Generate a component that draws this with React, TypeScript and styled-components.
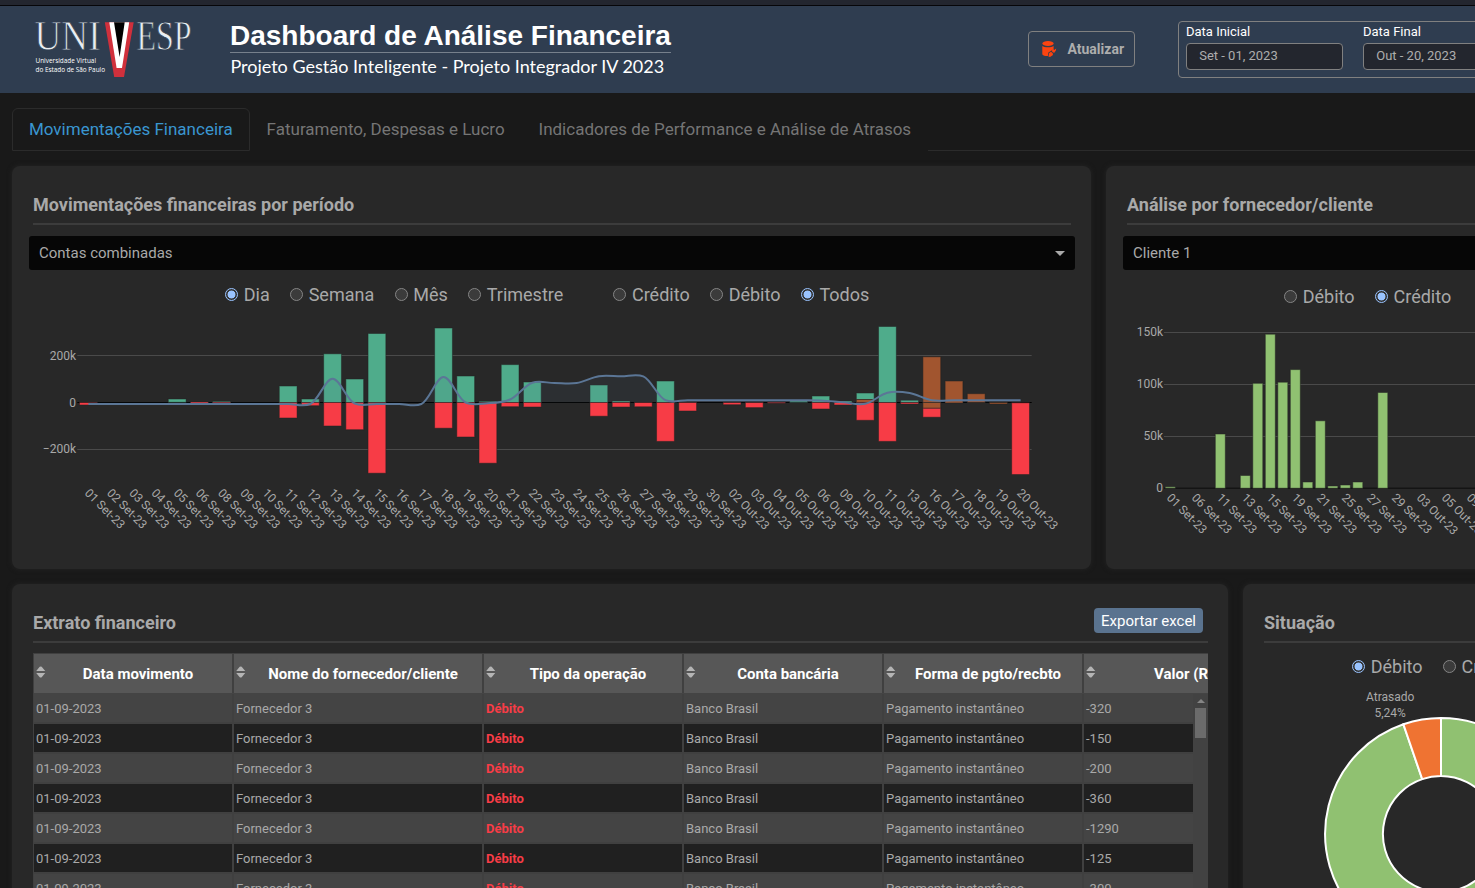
import React from "react";
import styled, { createGlobalStyle, css } from "styled-components";

const Global = createGlobalStyle`
  * { box-sizing: border-box; }
  html, body { margin: 0; padding: 0; height: 100%; overflow: hidden; background: #191919; }
  body { font-family: Roboto, "Liberation Sans", sans-serif; color: #a9a9a9; }
`;

const Page = styled.div`
  height: 888px;
  overflow: hidden;
  background: #191919;
`;

const TopStrip = styled.div`
  height: 6px;
  background: #23262f;
  border-bottom: 1px solid #060609;
`;

const Header = styled.header`
  display: flex;
  align-items: flex-start;
  width: 1900px;
  height: 87px;
  background: #2f3d50;
`;

const LogoBox = styled.div`
  width: 230px;
  flex: none;
  padding: 12px 0 0 30px;
  svg { display: block; }
`;

const Titles = styled.div`
  width: 798px;
  flex: none;
  padding-top: 14px;
  color: #fff;
`;

const Title = styled.h1`
  display: inline-block;
  margin: 0;
  height: 33px;
  font: bold 28px/32px "Liberation Sans", Arial, sans-serif;
  border-bottom: 1px solid #76808c;
  white-space: nowrap;
`;

const Subtitle = styled.div`
  padding-left: 0.4px;
  font: 18px/26px Lato, sans-serif;
  white-space: nowrap;
`;

const RefreshButton = styled.button`
  display: flex;
  align-items: center;
  gap: 10.5px;
  width: 107px;
  height: 36px;
  margin: 25px 43px 0 0;
  padding: 0 0 0 12px;
  flex: none;
  background: transparent;
  border: 1px solid #808080;
  border-radius: 4px;
  color: #adadad;
  font: bold 14px Roboto, sans-serif;
`;

const DateBox = styled.div`
  display: flex;
  gap: 20px;
  width: 345px;
  height: 57px;
  margin-top: 15px;
  padding: 2px 7px;
  border: 1px solid #808080;
  border-radius: 4px;
`;

const DateField = styled.label`
  display: block;
  width: 157px;
  flex: none;
  color: #fff;
  font-size: 13px;
  line-height: 16px;
`;

const DateInput = styled.div`
  height: 27px;
  margin-top: 3px;
  padding-left: 12.2px;
  border: 1px solid #808080;
  border-radius: 4px;
  background: #23262e;
  color: #adadad;
  line-height: 23px;
`;

const Tabs = styled.nav`
  display: flex;
  width: 1900px;
  height: 43px;
  margin: 15px 0 15px 12px;
`;

const Tab = styled.div<{ $active?: boolean }>`
  flex: none;
  height: 43px;
  padding: 0 15.95px;
  border: 1px solid transparent;
  border-radius: 6px 6px 0 0;
  font-size: 17px;
  line-height: 41px;
  white-space: nowrap;
  color: #757575;
  ${(p) => p.$active && css`
    color: #3a96d0;
    border-color: #2b2b2b;
  `}
`;

const TabFiller = styled.div`
  flex: 1;
  border-bottom: 1px solid #2b2b2b;
`;

const CardRow = styled.div<{ $height: number }>`
  display: flex;
  gap: 15px;
  width: 1900px;
  height: ${(p) => p.$height}px;
  margin: 0 0 15px 12px;
`;

const Card = styled.section<{ $width: number }>`
  width: ${(p) => p.$width}px;
  flex: none;
  padding: 25px 16px 0 17px;
  border-radius: 8px;
  background: #282828;
  box-shadow: 0 0 4px 1px #212121;
`;

const CardHead = styled.div`
  display: flex;
  justify-content: space-between;
  height: 34px;
  margin: 0 4px 11px;
  border-bottom: 2px solid #3c3c3c;
`;

const CardTitle = styled.h2`
  margin: 0;
  font-size: 18px;
  font-weight: bold;
  line-height: 28px;
  color: #a9a9a9;
  white-space: nowrap;
`;

const ExportButton = styled.button`
  width: 109px;
  height: 25px;
  margin: -1px 5px 0 0;
  padding: 0;
  border: 0;
  border-radius: 4px;
  background: #5a738f;
  color: #fff;
  font: 15px Roboto, sans-serif;
`;

const Select = styled.div`
  display: flex;
  align-items: center;
  justify-content: space-between;
  height: 34px;
  padding: 0 10px;
  border-radius: 3px;
  background: #060606;
  color: #a9a9a9;
  font-size: 15px;
`;

const Caret = styled.span`
  border: 5px solid transparent;
  border-top-color: #a9a9a9;
  border-bottom: 0;
`;

const Radios = styled.div<{ $left: number; $top: number; $raise?: number }>`
  display: flex;
  height: 24px;
  margin: ${(p) => p.$top}px 0 0 ${(p) => p.$left}px;
  i { margin-bottom: ${(p) => p.$raise ?? 0}px; }
`;

const RadioLabel = styled.span<{ $last?: boolean }>`
  display: flex;
  flex: none;
  align-items: center;
  gap: 5.7px;
  margin-right: ${(p) => (p.$last ? 50 : 20.3)}px;
  font-size: 18px;
  line-height: 24px;
  color: #a9a9a9;
`;

const Dot = styled.i<{ $on?: boolean }>`
  width: 13px;
  height: 13px;
  flex: none;
  border-radius: 50%;
  border: 1px solid ${(p) => (p.$on ? "#99c3ff" : "#858585")};
  background: ${(p) => (p.$on ? "radial-gradient(circle, #99c3ff 3.6px, #333 4.3px)" : "#3b3b3b")};
`;

const Plot = styled.svg<{ $pull: number }>`
  display: block;
  margin-top: ${(p) => p.$pull}px;
  overflow: visible;
  font: 12px Roboto, sans-serif;
  text { fill: #a9a9a9; }
`;

const Table = styled.div`
  width: 1175px;
  height: 260px;
  margin: -1px 4px 0;
  overflow: hidden;
  border-left: 1px solid #404040;
  border-top: 1px solid #404040;
`;

const HeadRow = styled.div`
  display: flex;
  width: 1400px;
  height: 40px;
  border-bottom: 1px solid #444;
`;

const HeadCell = styled.div<{ $width: number }>`
  display: flex;
  align-items: center;
  width: ${(p) => p.$width}px;
  flex: none;
  padding: 0 2px;
  border-right: 2px solid #404040;
  background: #575757;
  color: #fff;
  font-size: 15px;
  font-weight: bold;
  svg { flex: none; margin-bottom: 3px; }
  span { flex: 1; text-align: center; white-space: nowrap; }
`;

const BodyArea = styled.div`
  display: flex;
  width: 1174px;
`;

const Rows = styled.div`
  width: 1159px;
  overflow: hidden;
`;

const Row = styled.div<{ $dark: boolean }>`
  display: flex;
  width: 1400px;
  height: 30px;
  background: ${(p) => (p.$dark ? "#202020" : "#444")};
`;

const Cell = styled.div<{ $width: number; $debit?: boolean }>`
  width: ${(p) => p.$width}px;
  flex: none;
  padding-left: 2px;
  border-right: 2px solid #404040;
  border-bottom: 2px solid #404040;
  font-size: 13px;
  line-height: 29px;
  color: ${(p) => (p.$debit ? "#f73c46" : "#a9a9a9")};
  font-weight: ${(p) => (p.$debit ? "bold" : "normal")};
`;

const Scroll = styled.div`
  display: flex;
  flex-direction: column;
  align-items: center;
  width: 15px;
  height: 240px;
  background: #424242;
`;

const ScrollArrow = styled.i`
  margin-top: 5px;
  border: 4px solid transparent;
  border-top: 0;
  border-bottom-color: #858585;
`;

const Thumb = styled.i`
  width: 11px;
  height: 30px;
  margin-top: 5px;
  background: #6b6b6b;
`;

function Logo() {
  return (
    <svg width="170" height="70" viewBox="30 18 170 70">
      <g fontFamily="Liberation Serif, serif" fontSize="42" fill="#e9edf1" stroke="#2f3d50" strokeWidth="0.8">
        <text x="34.5" y="50.3" textLength="66" lengthAdjust="spacingAndGlyphs">UNI</text>
        <text x="136.5" y="50.3" textLength="55" lengthAdjust="spacingAndGlyphs">ESP</text>
      </g>
      <polygon points="104.8,22.3 133.7,22.3 124,77 114.2,77" fill="#d0303c" />
      <polygon points="109.3,22.3 129.2,22.3 122,68 116.6,68" fill="#fff" />
      <polygon points="114,22.3 124.7,22.3 119.6,57" fill="#000" />
      <g fontFamily="Open Sans, sans-serif" fontSize="6.4" fontWeight="500" fill="#fff">
        <text x="35.5" y="63" textLength="60.5">Universidade Virtual</text>
        <text x="35.5" y="71.8" textLength="69.5">do Estado de São Paulo</text>
      </g>
    </svg>
  );
}

function DatabaseIcon() {
  return (
    <svg width="16" height="18" viewBox="0 0 16 18" fill="#fb4410">
      <ellipse cx="7" cy="3.4" rx="5.6" ry="2.5" />
      <path d="M1.3 5.9C3 7.5 10.6 7.6 12.6 5.9V9.2L7.4 12.6L6.9 16H4.6C2.8 15.7 1.3 15 1.3 14Z" />
      <path d="M8.2 12.9L10 11.7L11.6 13L12 15L9 17L7.4 16.4Z" />
      <path d="M11.2 9.8L12.8 9.2L13.2 10L15.2 8.4L14.9 10.5L13.1 13L11 11.6Z" />
    </svg>
  );
}

function SortIcon() {
  return (
    <svg width="10" height="12" viewBox="0.3 0 10 12">
      <path d="M0.5 5L4 0.8Q5 0 6 0.8L9.5 5Z M0.5 7H9.5L6 11.2Q5 12 4 11.2Z" fill="#b4b4b4" />
    </svg>
  );
}

type Pt = [number, number];

/** Centripetal Catmull-Rom curve through the points, ends drawn as quadratics. */
function spline(pts: Pt[]) {
  const tangent = (a: Pt, b: Pt, c: Pt): [Pt, Pt] => {
    const d1 = [a[0] - b[0], a[1] - b[1]];
    const d2 = [c[0] - b[0], c[1] - b[1]];
    const l1 = Math.pow(d1[0] ** 2 + d1[1] ** 2, 0.25);
    const l2 = Math.pow(d2[0] ** 2 + d2[1] ** 2, 0.25);
    const nx = l2 * l2 * d1[0] - l1 * l1 * d2[0];
    const ny = l2 * l2 * d1[1] - l1 * l1 * d2[1];
    const k1 = 3 * l2 * (l1 + l2);
    const k2 = 3 * l1 * (l1 + l2);
    return [
      [b[0] + nx / k1, b[1] + ny / k1],
      [b[0] - nx / k2, b[1] - ny / k2],
    ];
  };
  const t = pts.slice(1, -1).map((p, i) => tangent(pts[i], p, pts[i + 2]));
  let d = `M${pts[0]}Q${t[0][0]} ${pts[1]}`;
  for (let i = 2; i < pts.length - 1; i++) d += `C${t[i - 2][1]} ${t[i - 1][0]} ${pts[i]}`;
  return d + `Q${t[t.length - 1][1]} ${pts[pts.length - 1]}`;
}

const SET = "01 02 03 04 05 06 08 09 10 11 12 13 14 15 16 17 18 19 20 21 22 23 24 25 26 27 28 29 30".split(" ").map((d) => d + " Set-23");
const OUT = "02 03 04 05 06 09 10 11 13 16 17 18 19 20".split(" ").map((d) => d + " Out-23");
const DAYS = [...SET, ...OUT];

const GREEN = "#4fac8b";
const RED = "#f73c46";
const BROWN = "#a1552f";

// [day index, top, bottom, colour]
const BARS: [number, number, number, string][] = [
  [0, 402.5, 405, RED], [4, 399, 402.3, GREEN], [5, 402, 404, RED], [6, 401.2, 402.5, GREEN], [6, 402, 403, RED],
  [9, 386, 402.5, GREEN], [9, 402.5, 418, RED], [10, 399, 402.5, GREEN], [10, 402.5, 405.7, RED],
  [11, 353.8, 402.5, GREEN], [11, 402.5, 426, RED], [12, 379, 402.5, GREEN], [12, 402.5, 429.7, RED],
  [13, 333.5, 402.5, GREEN], [13, 402.5, 473.2, RED], [16, 328, 402.5, GREEN], [16, 402.5, 428.2, RED],
  [17, 376, 402.5, GREEN], [17, 402.5, 437, RED], [18, 401.3, 402.5, GREEN], [18, 402.5, 463.2, RED],
  [19, 364.6, 402.5, GREEN], [19, 402.5, 406.7, RED], [20, 382, 402.5, GREEN], [20, 402.5, 407, RED],
  [23, 385, 402.5, GREEN], [23, 402.5, 416.2, RED], [24, 401, 402.5, GREEN], [24, 402.5, 407, RED],
  [25, 402.5, 406.8, RED], [26, 381, 402.5, GREEN], [26, 402.5, 441.4, RED], [27, 402.5, 411, RED],
  [29, 402.5, 404.7, RED], [30, 402.5, 407.6, RED], [31, 402.2, 403.2, RED], [32, 401, 402.5, GREEN],
  [33, 396, 402.5, GREEN], [33, 402.5, 409, RED], [34, 401, 402.5, GREEN], [34, 402.5, 405, RED],
  [35, 393, 399.5, GREEN], [35, 399.5, 402.5, BROWN], [35, 402.5, 420.3, RED], [36, 326.5, 402.5, GREEN],
  [36, 402.5, 441.4, RED], [37, 400.2, 402.5, GREEN], [37, 402.5, 404, RED], [38, 356.8, 402.5, BROWN],
  [38, 402.5, 408.3, BROWN], [38, 408.3, 417.2, RED], [39, 381, 403, BROWN], [40, 393.7, 402.5, BROWN],
  [41, 402.5, 404, BROWN], [42, 402.8, 474.5, RED],
];

const BALANCE = [
  404, 404, 404, 404, 404, 404, 404, 404, 404, 404, 404, 378.8, 403.5, 404, 404, 404, 377, 402.5, 403.2, 399.5, 382.7,
  383, 383, 376.2, 376.3, 376.4, 400.2, 400.2, 400.2, 400.2, 400.2, 400.2, 400.2, 400.4, 402.3, 403.8, 392.7, 393, 400.2,
  400.2, 400.2, 400.2, 400.2,
];

const dayX = (i: number) => 88.4 + i * 22.195;

function MovementsChart() {
  const line = spline(BALANCE.map((y, i) => [dayX(i), y] as Pt));
  return (
    <Plot $pull={10} width="1046" height="230" viewBox="29 317 1046 230">
      {[355.5, 449.5].map((y) => <path key={y} d={`M77.3 ${y}H1031.7`} stroke="#4a4a4a" />)}
      <path d="M77.3 402.5H1031.7" stroke="#000" />
      {BARS.map(([i, top, bottom, fill], k) => (
        <rect key={k} x={dayX(i) - 8.9} y={top} width="17.8" height={bottom - top} fill={fill} stroke="#222" strokeWidth="1" strokeOpacity="0.5" />
      ))}
      <path d={`${line}V402.5H88.4Z`} fill="#5b7696" fillOpacity="0.1" />
      <path d={line} fill="none" stroke="#5b7696" strokeWidth="2" />
      <g textAnchor="end">
        <text x="76" y="360">200k</text>
        <text x="76" y="407">0</text>
        <text x="76" y="453.3">−200k</text>
      </g>
      {DAYS.map((d, i) => (
        <text key={d} transform={`translate(${dayX(i) - 4.3} 493.7) rotate(45)`}>{d}</text>
      ))}
    </Plot>
  );
}

const CLIENT_LABELS = ["01 Set-23", "06 Set-23", "11 Set-23", "13 Set-23", "15 Set-23", "19 Set-23", "21 Set-23", "25 Set-23", "27 Set-23", "29 Set-23", "03 Out-23", "05 Out-23", "09 Out-23"];
const CLIENT_BARS: Pt[] = [[0, 486.8], [4, 434], [6, 475.5], [7, 383.3], [8, 334.2], [9, 382.2], [10, 369.6], [11, 482], [12, 420.8], [13, 486], [14, 485], [15, 482], [17, 392.5]];

function ClientChart() {
  return (
    <Plot $pull={8} width="700" height="230" viewBox="1123 317 700 230">
      {[332.5, 384.5, 436.5].map((y) => <path key={y} d={`M1164 ${y}H1800`} stroke="#4a4a4a" />)}
      <path d="M1164 488.2H1800" stroke="#0c0c0c" />
      {CLIENT_BARS.map(([i, top]) => (
        <rect key={i} x={1165.3 + i * 12.5} y={top} width="10" height={488.2 - top} fill="#90c171" stroke="#222" strokeWidth="1" strokeOpacity="0.5" />
      ))}
      <g textAnchor="end">
        <text x="1163" y="336">150k</text>
        <text x="1163" y="388">100k</text>
        <text x="1163" y="440">50k</text>
        <text x="1163" y="492">0</text>
      </g>
      {CLIENT_LABELS.map((d, i) => (
        <text key={d} transform={`translate(${1166.1 + i * 25} 498.6) rotate(45)`}>{d}</text>
      ))}
    </Plot>
  );
}

function StatusChart() {
  return (
    <Plot $pull={8} width="400" height="290" viewBox="1260 687 400 290">
      <g stroke="#fff" strokeWidth="2">
        <path d="M1441 718A116 116 0 1 1 1403.4 724.3L1422.2 779.1A58 58 0 1 0 1441 776Z" fill="#90c171" />
        <path d="M1403.4 724.3A116 116 0 0 1 1441 718V776A58 58 0 0 0 1422.2 779.1Z" fill="#ef7332" />
      </g>
      <g textAnchor="middle">
        <text x="1390.2" y="701">Atrasado</text>
        <text x="1390.2" y="717">5,24%</text>
      </g>
    </Plot>
  );
}

function Radio({ label, on, last }: { label: string; on?: boolean; last?: boolean }) {
  return (
    <RadioLabel $last={last}>
      <Dot $on={on} />
      {label}
    </RadioLabel>
  );
}

const COLUMNS: [string, number][] = [
  ["Data movimento", 200],
  ["Nome do fornecedor/cliente", 250],
  ["Tipo da operação", 200],
  ["Conta bancária", 200],
  ["Forma de pgto/recbto", 200],
  ["Valor (R$)", 200],
];
const VALUES = ["-320", "-150", "-200", "-360", "-1290", "-125", "-300"];

export default function App() {
  return (
    <Page>
      <Global />
      <TopStrip />
      <Header>
        <LogoBox><Logo /></LogoBox>
        <Titles>
          <Title>Dashboard de Análise Financeira</Title>
          <Subtitle>Projeto Gestão Inteligente - Projeto Integrador IV 2023</Subtitle>
        </Titles>
        <RefreshButton><DatabaseIcon />Atualizar</RefreshButton>
        <DateBox>
          <DateField>Data Inicial<DateInput>Set - 01, 2023</DateInput></DateField>
          <DateField>Data Final<DateInput>Out - 20, 2023</DateInput></DateField>
        </DateBox>
      </Header>
      <Tabs>
        <Tab $active>Movimentações Financeira</Tab>
        <Tab>Faturamento, Despesas e Lucro</Tab>
        <Tab>Indicadores de Performance e Análise de Atrasos</Tab>
        <TabFiller />
      </Tabs>
      <CardRow $height={403}>
        <Card $width={1079}>
          <CardHead><CardTitle>Movimentações financeiras por período</CardTitle></CardHead>
          <Select>Contas combinadas<Caret /></Select>
          <Radios $left={196} $top={13} $raise={1}>
            <Radio label="Dia" on />
            <Radio label="Semana" />
            <Radio label="Mês" />
            <Radio label="Trimestre" last />
            <Radio label="Crédito" />
            <Radio label="Débito" />
            <Radio label="Todos" on />
          </Radios>
          <MovementsChart />
        </Card>
        <Card $width={770}>
          <CardHead><CardTitle>Análise por fornecedor/cliente</CardTitle></CardHead>
          <Select>Cliente 1<Caret /></Select>
          <Radios $left={161} $top={15} $raise={1}>
            <Radio label="Débito" />
            <Radio label="Crédito" on />
          </Radios>
          <ClientChart />
        </Card>
      </CardRow>
      <CardRow $height={403}>
        <Card $width={1216}>
          <CardHead>
            <CardTitle>Extrato financeiro</CardTitle>
            <ExportButton>Exportar excel</ExportButton>
          </CardHead>
          <Table>
            <HeadRow>
              {COLUMNS.map(([name, width]) => (
                <HeadCell key={name} $width={width}><SortIcon /><span>{name}</span></HeadCell>
              ))}
            </HeadRow>
            <BodyArea>
              <Rows>
                {VALUES.map((value, i) => (
                  <Row key={value} $dark={i % 2 === 1}>
                    <Cell $width={200}>01-09-2023</Cell>
                    <Cell $width={250}>Fornecedor 3</Cell>
                    <Cell $width={200} $debit>Débito</Cell>
                    <Cell $width={200}>Banco Brasil</Cell>
                    <Cell $width={200}>Pagamento instantâneo</Cell>
                    <Cell $width={200}>{value}</Cell>
                  </Row>
                ))}
              </Rows>
              <Scroll><ScrollArrow /><Thumb /></Scroll>
            </BodyArea>
          </Table>
        </Card>
        <Card $width={633}>
          <CardHead><CardTitle>Situação</CardTitle></CardHead>
          <Radios $left={92} $top={12} $raise={1}>
            <Radio label="Débito" on />
            <Radio label="Crédito" />
          </Radios>
          <StatusChart />
        </Card>
      </CardRow>
    </Page>
  );
}
